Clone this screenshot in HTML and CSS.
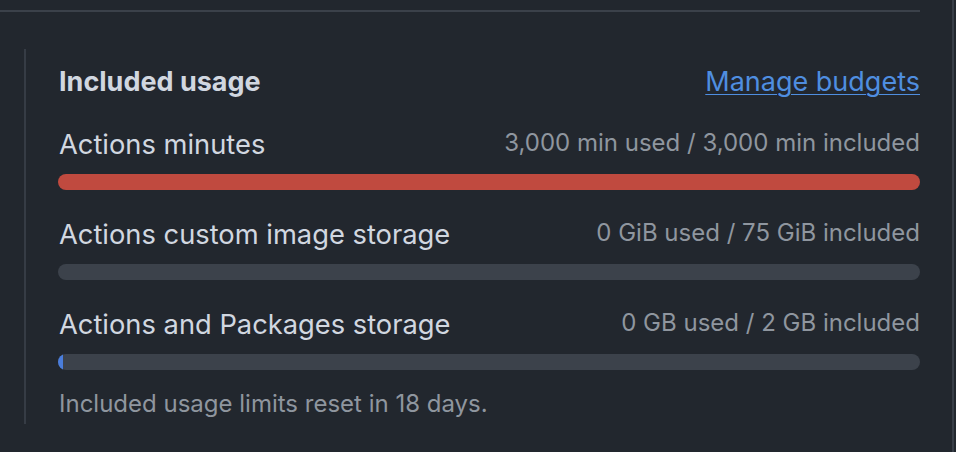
FILE: index.html
```html
<!DOCTYPE html>
<html lang="en-US">
  <head>
    <title>Included usage</title>
    <meta charset="utf-8" />
    <link rel="stylesheet" href="styles.css">
  </head>
  <body>
    <div class="page">
      <div class="topRule"></div>
      <div class="usage">
        <div class="usageHeader">
          <h2 class="usageTitle">Included usage</h2>
          <a class="manage" href="#">Manage budgets</a>
        </div>

        <div class="meter">
          <div class="meterText">
            <span class="meterName">Actions minutes</span>
            <span class="meterValue">3,000 min used / 3,000 min included</span>
          </div>
          <div class="track">
            <div class="fill danger" style="width: 100%"></div>
          </div>
        </div>

        <div class="meter">
          <div class="meterText">
            <span class="meterName">Actions custom image storage</span>
            <span class="meterValue">0 GiB used / 75 GiB included</span>
          </div>
          <div class="track">
            <div class="fill" style="width: 0%"></div>
          </div>
        </div>

        <div class="meter">
          <div class="meterText">
            <span class="meterName">Actions and Packages storage</span>
            <span class="meterValue">0 GB used / 2 GB included</span>
          </div>
          <div class="track">
            <div class="fill accent" style="width: 5px"></div>
          </div>
        </div>

        <p class="resetNote">Included usage limits reset in 18 days.</p>
      </div>
    </div>
  </body>
</html>
```

FILE: styles.css
```css
* {
  margin: 0;
  padding: 0;
  box-sizing: border-box;
}

body {
  background-color: #22272e;
  font-family: Inter, "Noto Sans", sans-serif;
  color: #d1d7e0;
  width: 956px;
  height: 452px;
  overflow: hidden;
}

.page {
  width: 954px;
  height: 452px;
  border-right: 2px solid #383e47;
}

.topRule {
  width: 920px;
  height: 12px;
  border-bottom: 2px solid #3b414a;
}

.usage {
  margin-top: 37px;
  margin-left: 24px;
  width: 896px;
  border-left: 2px solid #363c45;
  padding: 17px 0 5px 32px;
}

.usageHeader {
  display: flex;
  justify-content: space-between;
  align-items: baseline;
  height: 32px;
  margin-bottom: 30px;
}

.usageTitle {
  font-size: 27px;
  line-height: 32px;
  font-weight: 700;
  padding-left: 1px;
}

.manage {
  font-size: 27px;
  line-height: 32px;
  color: #4f8ee0;
  text-decoration: underline;
  text-underline-offset: 3px;
  text-decoration-thickness: 1px;
}

.meter {
  margin-bottom: 28px;
}

.meterText {
  display: flex;
  justify-content: space-between;
  align-items: flex-start;
  height: 34px;
  margin-bottom: 12px;
  padding-left: 1px;
}

.meterName {
  font-size: 27.3px;
  line-height: 34px;
}

.meterValue {
  font-size: 24px;
  line-height: 29px;
  color: #8f969f;
}

.track {
  height: 16px;
  border-radius: 8px;
  background-color: #3c424b;
  overflow: hidden;
}

.fill {
  height: 100%;
}

.danger {
  background-color: #c04a3f;
}

.accent {
  background-color: #4a7ddb;
}

.resetNote {
  margin-top: -9px;
  font-size: 24px;
  line-height: 30px;
  color: #8f969f;
  padding-left: 1px;
}
```
